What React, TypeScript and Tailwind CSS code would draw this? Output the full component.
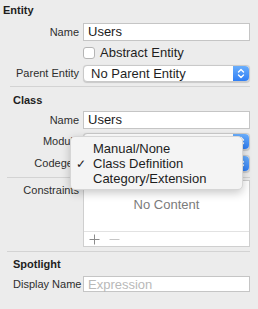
import React from 'react';

const font = { fontFamily: '"Liberation Sans", Arial, sans-serif' };

function Stepper() {
  return (
    <div className="w-[16px] h-full rounded-r-[4px] bg-gradient-to-b from-[#6aaefc] to-[#2f7ef4] flex items-center justify-center">
      <svg width="8" height="11" viewBox="0 0 8 11" fill="none" stroke="white" strokeWidth="1.4" strokeLinecap="round" strokeLinejoin="round">
        <path d="M1.5 4 L4 1.5 L6.5 4" />
        <path d="M1.5 7 L4 9.5 L6.5 7" />
      </svg>
    </div>
  );
}

function Popup({ value = '' }: { value?: string }) {
  return (
    <div className="h-[17px] w-[167px] flex items-stretch rounded-[4px] bg-white border border-[#c9c9c9] shadow-[0_0.5px_1px_rgba(0,0,0,0.15)]">
      <div className="flex-1 pl-[7px] text-[13px] leading-[15px] text-[#1f1f1f] truncate">{value}</div>
      <Stepper />
    </div>
  );
}

function TextField({ value, placeholder, h = 'h-[18px]' }: { value?: string; placeholder?: string; h?: string }) {
  return (
    <div className={`${h} w-[167px] bg-white border border-[#c5c5c5] flex items-center pl-[4px] text-[13px]`}>
      {value ? <span className="text-[#1a1a1a]">{value}</span> : <span className="text-[#b9b9b9]">{placeholder}</span>}
    </div>
  );
}

function Row({ label, children, className = '' }: { label: string; children: React.ReactNode; className?: string }) {
  return (
    <div className={`flex items-center ${className}`}>
      <div className="w-[83px] pr-[4px] text-right text-[11px] text-[#2e2e2e] whitespace-nowrap">{label}</div>
      {children}
    </div>
  );
}

export default function App() {
  return (
    <div className="relative w-[258px] h-[309px] overflow-hidden bg-[#ececec] select-none" style={font}>
      {/* Entity */}
      <div className="pt-[4px] pl-[3px] text-[11px] font-bold text-[#1e1e1e] leading-[12px]">Entity</div>
      <Row label="Name" className="mt-[7px]">
        <TextField value="Users" />
      </Row>
      <div className="mt-[4px] ml-[83px] flex items-center gap-[5px]">
        <div className="w-[12px] h-[12px] rounded-[3px] bg-white border border-[#b5b5b5]" />
        <span className="text-[13px] text-[#1e1e1e] leading-[15px]">Abstract Entity</span>
      </div>
      <Row label="Parent Entity" className="mt-[5px]">
        <Popup value="No Parent Entity" />
      </Row>
      <div className="mt-[4px] ml-[10px] mr-[8px] h-px bg-[#d3d3d3]" />

      {/* Class */}
      <div className="mt-[7px] pl-[13px] text-[11px] font-bold text-[#1e1e1e] leading-[12px]">Class</div>
      <Row label="Name" className="mt-[5px]">
        <TextField value="Users" />
      </Row>
      <Row label="Module" className="mt-[4px]">
        <Popup />
      </Row>
      <Row label="Codegen" className="mt-[5px]">
        <Popup />
      </Row>
      <div className="mt-[5px] ml-[7px] mr-[8px] h-px bg-[#d3d3d3]" />
      <div className="mt-[2px] flex items-start">
        <div className="w-[83px] pr-[4px] pt-[2px] text-right text-[11px] text-[#2e2e2e]">Constraints</div>
        <div className="w-[167px] h-[67px] bg-white border border-[#cfcfcf] flex flex-col">
          <div className="flex-1 flex items-center justify-center text-[13px] text-[#7b7b7b] pb-[2px]">No Content</div>
          <div className="h-[15px] border-t border-[#e2e2e2] flex items-center pl-[5px] gap-[9px]">
            <svg width="11" height="11" viewBox="0 0 11 11" stroke="#8c8c8c" strokeWidth="1">
              <path d="M5.5 0.5 V10.5 M0.5 5.5 H10.5" />
            </svg>
            <svg width="11" height="11" viewBox="0 0 11 11" stroke="#c6c6c6" strokeWidth="1">
              <path d="M0.5 5.5 H10.5" />
            </svg>
          </div>
        </div>
      </div>
      <div className="mt-[4px] ml-[7px] mr-[8px] h-px bg-[#d3d3d3]" />

      {/* Spotlight */}
      <div className="mt-[6px] pl-[13px] text-[11px] font-bold text-[#1e1e1e] leading-[12px]">Spotlight</div>
      <div className="mt-[6px] flex items-center">
        <div className="w-[83px] pl-[13px] text-[11px] text-[#2e2e2e] whitespace-nowrap">Display Name</div>
        <TextField placeholder="Expression" h="h-[16px]" />
      </div>

      {/* Codegen menu */}
      <div className="absolute left-[70px] top-[136px] w-[173px] h-[54px] rounded-[5px] bg-[#f4f4f4] border border-[#d6d6d6] shadow-[0_3px_10px_rgba(0,0,0,0.22)] pt-[4px]">
        {['Manual/None', 'Class Definition', 'Category/Extension'].map((item, i) => (
          <div key={item} className="h-[15px] flex items-center text-[13px] text-[#1d1d1d]">
            <span className="w-[22px] pl-[5px] text-[12px]">{i === 1 ? '✓' : ''}</span>
            {item}
          </div>
        ))}
      </div>
    </div>
  );
}
